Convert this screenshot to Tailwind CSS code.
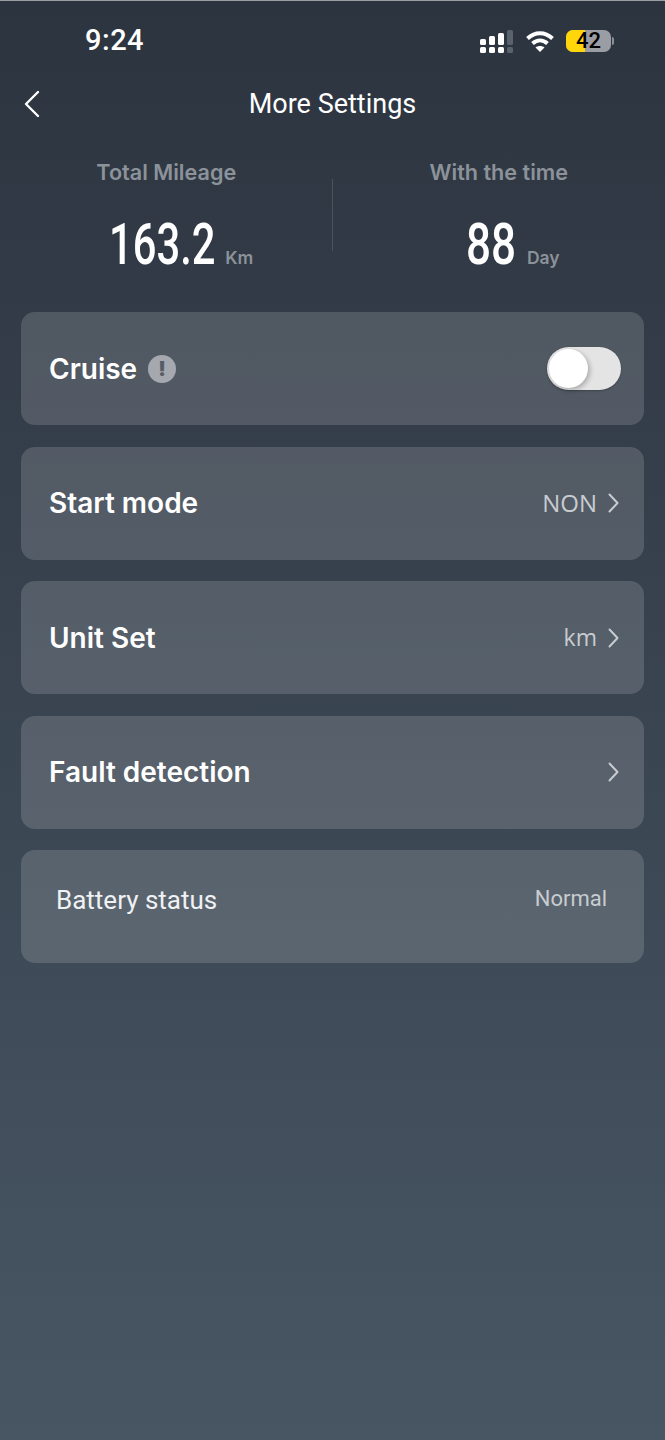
<!DOCTYPE html>
<html lang="en">
<head>
    <meta charset="UTF-8">
    <meta name="viewport" content="width=device-width, initial-scale=1.0">
    <title>More Settings</title>
    <script src="https://cdn.jsdelivr.net/npm/@tailwindcss/browser@4"></script>
</head>
<body>
    <div class="w-[665px] h-[1440px] overflow-hidden flex flex-col bg-gradient-to-b from-[#2c343f] to-[#485664] border-t border-[#9a9da2] font-['Inter',sans-serif] text-white">

        <!-- status bar -->
        <div class="h-[79px] shrink-0 flex items-center justify-between pl-[85px] pr-[51px]">
            <span class="font-['Roboto',sans-serif] text-[29px] font-medium leading-none tracking-[0.5px]">9:24</span>
            <div class="flex items-center gap-[10px]">
                <svg width="36" height="24" viewBox="0 0 36 24" fill="#fff">
                    <rect x="1" y="10" width="6" height="6" rx="1.5"/>
                    <rect x="10" y="7" width="6" height="9" rx="1.5"/>
                    <rect x="19" y="4" width="6" height="12" rx="1.5"/>
                    <rect x="28" y="1" width="6" height="15" rx="1.5" fill="#5a626c"/>
                    <rect x="1" y="18" width="6" height="6" rx="1.5"/>
                    <rect x="10" y="18" width="6" height="6" rx="1.5"/>
                    <rect x="19" y="18" width="6" height="6" rx="1.5"/>
                    <rect x="28" y="18" width="6" height="6" rx="1.5" fill="#5a626c"/>
                </svg>
                <svg width="30" height="24" viewBox="0 0 30 24" fill="none" stroke="#fff" stroke-width="4">
                    <path d="M2.5 9.5C10 2.5 20 2.5 27.5 9.5"/>
                    <path d="M7.5 14.500C12 10.500 18 10.500 22.500 14.500"/>
                    <path d="M15 23L10.500 18.500C13 16.500 17 16.500 19.500 18.500Z" fill="#fff" stroke="none"/>
                </svg>
                <div class="flex items-center gap-[1px] ml-[1px]">
                    <div class="relative w-[45px] h-[22px] rounded-[7px] bg-[#9a9da3] flex items-center justify-center">
                        <div class="absolute left-0 top-0 bottom-0 w-[19px] rounded-l-[7px] bg-[#ffd60a]"></div>
                        <span class="relative font-['Roboto',sans-serif] text-[22px] font-medium leading-[22px] text-black">42</span>
                    </div>
                    <div class="w-[2px] h-[8px] rounded-r-sm bg-[#8b9097]"></div>
                </div>
            </div>
        </div>

        <!-- nav -->
        <div class="relative h-[50px] shrink-0 flex items-center justify-center">
            <svg class="absolute left-[22px] top-[10px]" width="20" height="28" viewBox="0 0 20 28" fill="none" stroke="#fff" stroke-width="2.400" stroke-linecap="round" stroke-linejoin="round">
                <path d="M16 2L4 14L16 26"/>
            </svg>
            <span class="font-['Roboto',sans-serif] text-[27px] leading-none -mt-[2px]">More Settings</span>
        </div>

        <!-- stats -->
        <div class="relative h-[182px] shrink-0 grid grid-cols-2">
            <div class="flex flex-col items-center pt-[29px]">
                <span class="text-[21.600px] font-semibold leading-[26px] text-[#8c929a]">Total Mileage</span>
                <div class="flex items-end h-[72px] mt-[24px] pl-[30px] pb-[16px]">
                    <span class="block w-[105px] font-['Roboto',sans-serif] text-[58px] font-medium leading-[42px] whitespace-nowrap origin-left scale-x-[0.72]">163.2</span>
                    <span class="ml-[11px] -mb-[1px] text-[17.500px] font-semibold leading-none text-[#8c929a]">Km</span>
                </div>
            </div>
            <div class="flex flex-col items-center pt-[29px]">
                <span class="text-[21.600px] font-semibold leading-[26px] text-[#8c929a]">With the time</span>
                <div class="flex items-end h-[72px] mt-[24px] pl-[28px] pb-[16px]">
                    <span class="block w-[50px] font-['Roboto',sans-serif] text-[58px] font-medium leading-[42px] whitespace-nowrap origin-left scale-x-[0.76]">88</span>
                    <span class="ml-[11px] -mb-[1px] text-[17.500px] font-semibold leading-none text-[#8c929a]">Day</span>
                </div>
            </div>
            <div class="absolute left-[332px] top-[49px] w-px h-[72px] bg-[#4a525c]"></div>
        </div>

        <!-- settings -->
        <div class="flex flex-col gap-[21.500px] px-[21px]">
            <div class="h-[113px] rounded-[14px] bg-white/15 flex items-center justify-between pl-[28px] pr-[23px]">
                <div class="flex items-center gap-[11px]">
                    <span class="text-[28px] font-semibold leading-none">Cruise</span>
                    <div class="w-[28px] h-[28px] rounded-full bg-[#a5a8ae] flex items-center justify-center text-[#555c64] text-[20px] font-black leading-none">!</div>
                </div>
                <div class="relative w-[74px] h-[43px] rounded-full bg-[#e4e4e5] shadow-[0_1px_2px_rgba(0,0,0,0.25)]">
                    <div class="absolute left-[2px] top-[2px] w-[39px] h-[39px] rounded-full bg-white shadow-[2px_2px_5px_rgba(0,0,0,0.25)]"></div>
                </div>
            </div>

            <div class="h-[113px] rounded-[14px] bg-white/15 flex items-center justify-between pl-[28px] pr-[25px]">
                <span class="text-[28px] font-semibold leading-none">Start mode</span>
                <div class="flex items-center gap-[11px]">
                    <span class="font-['Open_Sans',sans-serif] text-[24px] leading-none text-[#c8ccd0]">NON</span>
                    <svg width="11" height="20" viewBox="0 0 11 20" fill="none" stroke="#c8ccd0" stroke-width="2" stroke-linecap="round" stroke-linejoin="round"><path d="M1.500 1.500L9.500 10L1.500 18.500"/></svg>
                </div>
            </div>

            <div class="h-[113px] rounded-[14px] bg-white/15 flex items-center justify-between pl-[28px] pr-[25px]">
                <span class="text-[28px] font-semibold leading-none">Unit Set</span>
                <div class="flex items-center gap-[11px]">
                    <span class="font-['Open_Sans',sans-serif] text-[23px] leading-none text-[#c8ccd0]">km</span>
                    <svg width="11" height="20" viewBox="0 0 11 20" fill="none" stroke="#c8ccd0" stroke-width="2" stroke-linecap="round" stroke-linejoin="round"><path d="M1.500 1.500L9.500 10L1.500 18.500"/></svg>
                </div>
            </div>

            <div class="h-[113px] rounded-[14px] bg-white/15 flex items-center justify-between pl-[28px] pr-[25px]">
                <span class="text-[28px] font-semibold leading-none">Fault detection</span>
                <svg width="11" height="20" viewBox="0 0 11 20" fill="none" stroke="#c8ccd0" stroke-width="2" stroke-linecap="round" stroke-linejoin="round"><path d="M1.500 1.500L9.500 10L1.500 18.500"/></svg>
            </div>

            <div class="h-[113px] rounded-[14px] bg-white/15 flex items-start justify-between pl-[35px] pr-[37px] pt-[35px]">
                <span class="font-['Roboto',sans-serif] text-[26px] leading-[30px] text-[#f0f1f2]">Battery status</span>
                <span class="font-['Roboto',sans-serif] text-[22px] leading-[28px] text-[#c8ccd0]">Normal</span>
            </div>
        </div>
    </div>
</body>
</html>
